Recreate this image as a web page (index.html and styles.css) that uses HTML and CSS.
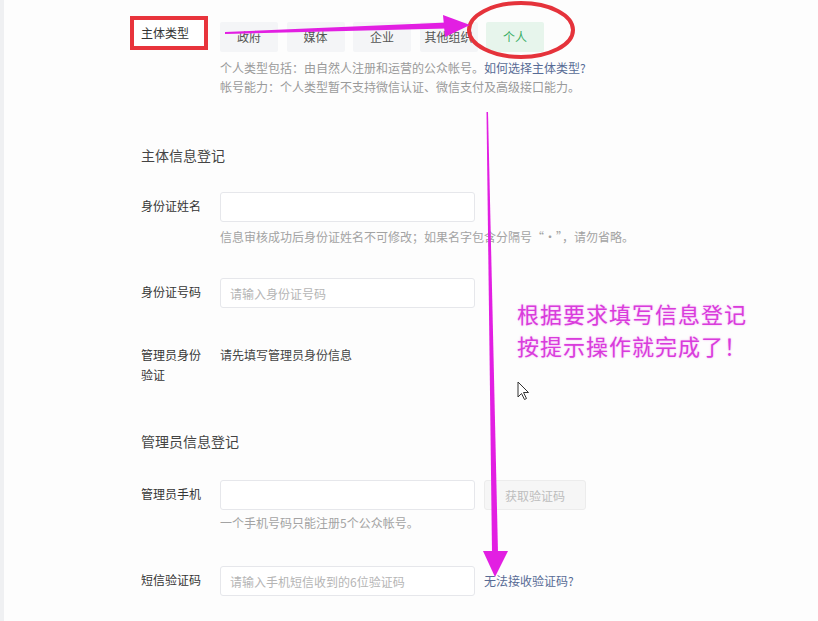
FILE: index.html
```html
<!DOCTYPE html>
<html lang="zh-CN">
<head>
  <meta charset="UTF-8" />
  <meta name="viewport" content="width=device-width, initial-scale=1.0" />
  <title>公众号注册 - 信息登记</title>
  <link rel="stylesheet" href="styles.css">
</head>
<body>
  <div class="page">
    <!-- 主体类型 -->
    <div class="type-row">
      <div class="type-label">主体类型</div>
      <div class="tabs">
        <span class="tab">政府</span>
        <span class="tab">媒体</span>
        <span class="tab">企业</span>
        <span class="tab">其他组织</span>
        <span class="tab active">个人</span>
      </div>
    </div>
    <div class="type-desc">
      <p>个人类型包括：由自然人注册和运营的公众帐号。<a class="link" href="#">如何选择主体类型?</a></p>
      <p>帐号能力：个人类型暂不支持微信认证、微信支付及高级接口能力。</p>
    </div>

    <!-- 主体信息登记 -->
    <h3 class="section-title">主体信息登记</h3>
    <div class="form-row first">
      <label class="form-label">身份证姓名</label>
      <div class="form-field">
        <input type="text" class="input" />
        <p class="hint">信息审核成功后身份证姓名不可修改；如果名字包含分隔号“·”，请勿省略。</p>
      </div>
    </div>
    <div class="form-row id-row">
      <label class="form-label">身份证号码</label>
      <div class="form-field">
        <input type="text" class="input" placeholder="请输入身份证号码" />
      </div>
    </div>
    <div class="form-row verify-row">
      <label class="form-label">管理员身份验证</label>
      <div class="form-field">
        <p class="plain">请先填写管理员身份信息</p>
      </div>
    </div>

    <!-- 管理员信息登记 -->
    <h3 class="section-title second">管理员信息登记</h3>
    <div class="form-row first">
      <label class="form-label">管理员手机</label>
      <div class="form-field">
        <div class="inline">
          <input type="text" class="input" />
          <button class="code-btn" disabled>获取验证码</button>
        </div>
        <p class="hint tight">一个手机号码只能注册5个公众帐号。</p>
      </div>
    </div>
    <div class="form-row sms-row">
      <label class="form-label">短信验证码</label>
      <div class="form-field">
        <div class="inline">
          <input type="text" class="input" placeholder="请输入手机短信收到的6位验证码" />
          <a class="link side-link" href="#">无法接收验证码?</a>
        </div>
      </div>
    </div>
  </div>

  <!-- tutorial markup drawn over the page -->
  <svg class="marks" width="818" height="621" viewBox="0 0 818 621">
    <ellipse cx="521" cy="30" rx="52" ry="27" fill="none" stroke="#e5333b" stroke-width="4" />
    <polygon points="225,32 225,34 447,28.5 447,22.5" fill="#e21fe2" />
    <polygon points="443,15 470,25 445,37" fill="#e21fe2" />
    <polygon points="486.5,112 488,112 498,553 492,553" fill="#e21fe2" />
    <polygon points="483,551 508,551 495,577" fill="#e21fe2" />
  </svg>
  <div class="note">
    <p>根据要求填写信息登记</p>
    <p>按提示操作就完成了！</p>
  </div>
  <svg class="cursor" width="14" height="20" viewBox="0 0 14 20">
    <path d="M1 1 L1 16 L4.5 12.5 L7.5 18.5 L9.5 17.5 L6.5 11.5 L11.5 11.5 Z" fill="#fff" stroke="#333" stroke-width="1" stroke-linejoin="round" />
  </svg>
</body>
</html>
```

FILE: styles.css
```css
body {
  margin: 0;
  padding: 0;
  background-color: #fdfdfd;
  font-family: "Noto Sans CJK SC", "Noto Sans", sans-serif;
  color: #353535;
  position: relative;
  width: 818px;
  height: 621px;
  overflow: hidden;
}
p {
  margin: 0;
}
.page {
  border-left: 4px solid #eff0f2;
  height: 621px;
  box-sizing: border-box;
  padding: 16px 0 0 137px;
}
.type-row {
  display: flex;
  align-items: flex-start;
}
.type-label {
  margin-left: -11px;
  margin-right: 12px;
  width: 78px;
  height: 34px;
  box-sizing: border-box;
  border: 4px solid #e8343c;
  padding-left: 7px;
  font-size: 12px;
  line-height: 26px;
  color: #333;
  background-color: #fff;
}
.tabs {
  display: flex;
  gap: 8.5px;
  margin-top: 6px;
}
.tab {
  width: 58px;
  height: 30px;
  line-height: 30px;
  text-align: center;
  font-size: 12px;
  color: #555;
  background-color: #f4f5f7;
  border-radius: 2px;
}
.tab.active {
  background-color: #e7f5ec;
  color: #3aae66;
}
.type-desc {
  margin: 6px 0 0 79px;
  font-size: 12px;
  line-height: 19px;
  color: #9a9a9a;
}
.link {
  color: #576b95;
  text-decoration: none;
}
.section-title {
  margin: 49px 0 0;
  font-size: 14px;
  line-height: 20px;
  font-weight: normal;
  color: #444;
}
.section-title.second {
  margin-top: 46px;
}
.form-row {
  display: flex;
  align-items: flex-start;
}
.form-row.first {
  margin-top: 27px;
}
.form-row.id-row {
  margin-top: 32px;
}
.form-row.verify-row {
  margin-top: 37px;
}
.form-row.sms-row {
  margin-top: 34px;
}
.section-title.second + .form-row.first {
  margin-top: 29px;
}
.form-label {
  width: 79px;
  flex-shrink: 0;
  font-size: 12px;
  line-height: 28px;
  color: #353535;
}
.verify-row .form-label {
  width: 64px;
  margin-right: 15px;
  line-height: 20px;
}
.form-field {
  display: flex;
  flex-direction: column;
}
.input {
  width: 255px;
  height: 30px;
  box-sizing: border-box;
  border: 1px solid #e6e7eb;
  border-radius: 3px;
  padding: 0 9px;
  font-family: inherit;
  font-size: 12px;
  color: #333;
  background-color: #fff;
  outline: none;
}
.input::placeholder {
  color: #b5b5b5;
}
.hint {
  margin-top: 6px;
  font-size: 12px;
  line-height: 18px;
  color: #a3a3a3;
}
.hint.tight {
  margin-top: 4px;
}
.plain {
  font-size: 12px;
  line-height: 20px;
  color: #444;
}
.inline {
  display: flex;
  align-items: center;
}
.code-btn {
  margin-left: 9px;
  width: 102px;
  height: 30px;
  border: 1px solid #ececec;
  border-radius: 3px;
  background-color: #f6f6f6;
  color: #bdbdbd;
  font-family: inherit;
  font-size: 12px;
}
.side-link {
  margin-left: 9px;
  font-size: 12px;
  line-height: 30px;
}
.marks {
  position: absolute;
  top: 0;
  left: 0;
  pointer-events: none;
}
.note {
  position: absolute;
  left: 517px;
  top: 297px;
  font-size: 22px;
  line-height: 32px;
  letter-spacing: 1px;
  color: #d93cdc;
  text-shadow: 0 0 2px rgba(240, 130, 240, 0.7);
}
.cursor {
  position: absolute;
  left: 517px;
  top: 381px;
}
```
